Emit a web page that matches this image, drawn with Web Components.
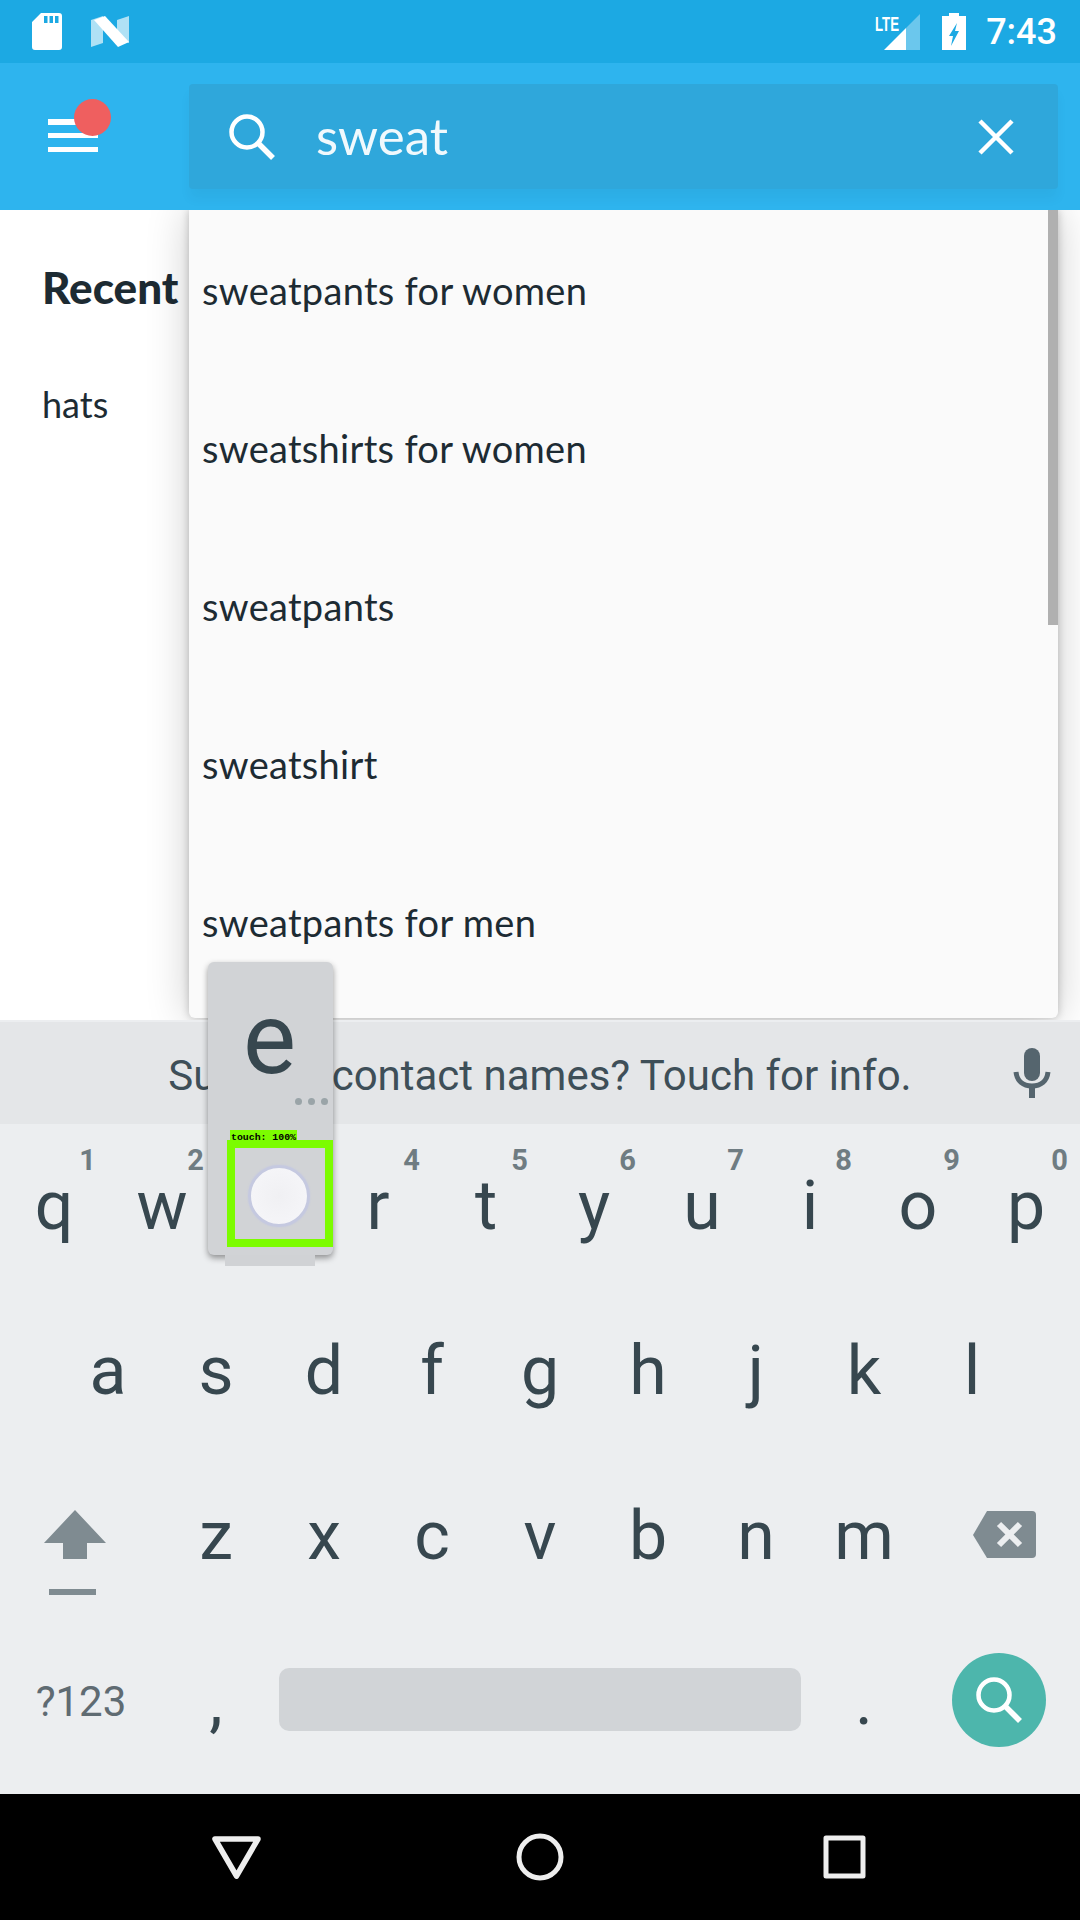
<!DOCTYPE html>
<html>
<head>
<meta charset="utf-8">
<style>
  html, body { margin: 0; padding: 0; background: #fff; }
  body { width: 1080px; height: 1920px; overflow: hidden; display: flex; flex-direction: column; position: relative; font-family: Roboto, sans-serif; }
</style>
</head>
<body>
<status-bar></status-bar>
<app-bar query="sweat"></app-bar>
<main-area>
  <recent-pane slot="recent" term="hats"></recent-pane>
  <suggestion-list slot="list">
    <suggestion-item>sweatpants for women</suggestion-item>
    <suggestion-item>sweatshirts for women</suggestion-item>
    <suggestion-item>sweatpants</suggestion-item>
    <suggestion-item>sweatshirt</suggestion-item>
    <suggestion-item>sweatpants for men</suggestion-item>
  </suggestion-list>
</main-area>
<key-board></key-board>
<nav-bar></nav-bar>
<key-popup letter="e"></key-popup>

<script>
class StatusBar extends HTMLElement {
  constructor() {
    super();
    this.shadowDOM = this.attachShadow({ mode: 'open' });
  }

  connectedCallback() {
    this.shadowDOM.innerHTML = `
      <style>
        :host { display: flex; align-items: center; height: 63px; flex: none; background: #1ca9e3; padding: 0 23px 0 32px; color: #fff; font-family: Roboto, sans-serif; }
        svg { display: block; flex: none; }
        .sd { margin-right: 29px; }
        .lte { margin-left: auto; margin-right: 22px; }
        .battery { margin-right: 20px; }
        .time { font-size: 36px; font-weight: 500; line-height: 63px; margin-top: 1px; }
      </style>
      <svg class="sd" width="30" height="37" viewBox="0 0 30 37">
        <path fill="#fff" fill-rule="evenodd" d="M9 0H27a3 3 0 0 1 3 3V34a3 3 0 0 1-3 3H3a3 3 0 0 1-3-3V9ZM12 3v7h3.500V3ZM17.500 3v7h3.500V3ZM23 3v7h3.500V3Z"/>
      </svg>
      <svg width="38" height="31" viewBox="0 0 38 31">
        <path fill="#fff" opacity=".65" d="M0 4 12 0V27L0 31Z"/>
        <path fill="#fff" opacity=".65" d="M26 4 38 0V27L26 23Z"/>
        <path fill="#fff" d="M3 4 14 0 38 26 27 31Z"/>
      </svg>
      <svg class="lte" width="45" height="36" viewBox="0 0 45 36">
        <path fill="#fff" d="M9 36 31 14V36Z"/>
        <path fill="#fff" opacity=".35" d="M31 14 45 0V36H31Z"/>
        <text x="0" y="17" font-family="Liberation Sans" font-weight="700" font-size="20" fill="#fff" textLength="24" lengthAdjust="spacingAndGlyphs">LTE</text>
      </svg>
      <svg class="battery" width="24" height="37" viewBox="0 0 24 37">
        <path fill="#fff" d="M7 0H17V3H24V37H0V3H7Z"/>
        <path fill="#1ca9e3" d="M15 10 7 23H11L9 33 17 18H13Z"/>
      </svg>
      <span class="time">7:43</span>`;
  }
}

class AppBar extends HTMLElement {
  constructor() {
    super();
    this.shadowDOM = this.attachShadow({ mode: 'open' });
  }

  connectedCallback() {
    this.shadowDOM.innerHTML = `
      <style>
        :host { display: flex; align-items: center; height: 147px; flex: none; background: #2eb4ee; padding-left: 48px; padding-right: 22px; box-sizing: border-box; position: relative; z-index: 2; font-family: Lato, sans-serif; }
        .menu { width: 50px; height: 33px; position: relative; margin-bottom: 2px; margin-right: 91px; display: flex; flex-direction: column; justify-content: space-between; flex: none; }
        .menu i { display: block; height: 5.500px; background: #fff; }
        .dot { position: absolute; left: 26px; top: -20px; width: 37px; height: 37px; border-radius: 50%; background: #ef5f5f; }
        .box { flex: 1; height: 105px; background: #2fa7db; border-radius: 4px; display: flex; align-items: center; padding: 0 44px 0 40px; box-shadow: 0 10px 12px rgba(0,0,0,.04); }
        .text { color: rgba(255,255,255,.93); font-size: 51px; font-weight: 400; margin-left: 41px; flex: 1; margin-bottom: 2px; }
        svg { display: block; flex: none; }
      </style>
      <div class="menu"><i></i><i></i><i></i><span class="dot"></span></div>
      <div class="box">
        <svg width="46" height="46" viewBox="0 0 46 46" fill="none" stroke="#fff">
          <circle cx="18" cy="18" r="15.500" stroke-width="4.500"/>
          <path d="M29 29 44 44" stroke-width="5.500"/>
        </svg>
        <span class="text">${this.getAttribute('query')}</span>
        <svg width="36" height="36" viewBox="0 0 36 36" fill="none" stroke="#fff" stroke-width="4.500">
          <path d="M2 2 34 34M34 2 2 34"/>
        </svg>
      </div>`;
  }
}

class MainArea extends HTMLElement {
  constructor() {
    super();
    this.shadowDOM = this.attachShadow({ mode: 'open' });
  }

  connectedCallback() {
    this.shadowDOM.innerHTML = `
      <style>
        :host { display: flex; height: 810px; flex: none; background: #fff; overflow: hidden; }
      </style>
      <slot name="recent"></slot>
      <slot name="list"></slot>`;
  }
}

class RecentPane extends HTMLElement {
  constructor() {
    super();
    this.shadowDOM = this.attachShadow({ mode: 'open' });
  }

  connectedCallback() {
    this.shadowDOM.innerHTML = `
      <style>
        :host { display: block; width: 189px; box-sizing: border-box; padding: 51px 0 0 42px; flex: none; font-family: Lato, sans-serif; color: #1d2b33; white-space: nowrap; }
        h2 { margin: 0 0 69px; font-size: 44px; line-height: 52px; font-weight: 900; }
        p { margin: 0; font-size: 36px; line-height: 44px; }
      </style>
      <h2>Recent</h2>
      <p>${this.getAttribute('term')}</p>`;
  }
}

class SuggestionList extends HTMLElement {
  constructor() {
    super();
    this.shadowDOM = this.attachShadow({ mode: 'open' });
  }

  connectedCallback() {
    this.shadowDOM.innerHTML = `
      <style>
        :host { display: block; width: 869px; height: 808px; flex: none; background: #fafafa; box-sizing: border-box; padding-top: 1px; position: relative; border-radius: 0 0 6px 6px; box-shadow: 0 0 9px rgba(0,0,0,.22), 0 0 44px rgba(0,0,0,.2); }
        .thumb { position: absolute; right: 0; top: 0; width: 10px; height: 415px; background: #b0b0b0; }
      </style>
      <slot></slot>
      <div class="thumb"></div>`;
  }
}

class SuggestionItem extends HTMLElement {
  constructor() {
    super();
    this.shadowDOM = this.attachShadow({ mode: 'open' });
  }

  connectedCallback() {
    this.shadowDOM.innerHTML = `
      <style>
        :host { display: flex; align-items: center; height: 158px; padding-left: 13px; font-family: Lato, sans-serif; font-size: 38px; letter-spacing: .3px; color: #1d2b33; }
      </style>
      <slot></slot>`;
  }
}

class KeyCap extends HTMLElement {
  constructor() {
    super();
    this.shadowDOM = this.attachShadow({ mode: 'open' });
  }

  connectedCallback() {
    const hint = this.getAttribute('hint');
    this.shadowDOM.innerHTML = `
      <style>
        :host { display: flex; justify-content: center; width: 108px; height: 165px; line-height: 165px; font-size: 68px; color: #37474f; position: relative; flex: none; }
        :host([wide]) { width: 162px; }
        :host([space]) { width: 540px; }
        .hint { position: absolute; top: 21px; right: 12px; font-size: 29px; line-height: 30px; font-weight: 700; color: #6f7c82; }
      </style>
      <slot></slot>
      ${hint ? `<span class="hint">${hint}</span>` : ''}`;
  }
}

class KeyBoard extends HTMLElement {
  constructor() {
    super();
    this.shadowDOM = this.attachShadow({ mode: 'open' });
  }

  connectedCallback() {
    const keys = (letters, hints = '') => [...letters]
      .map((l, i) => `<key-cap ${hints[i] ? `hint="${hints[i]}"` : ''}>${l}</key-cap>`).join('');
    this.shadowDOM.innerHTML = `
      <style>
        :host { display: block; height: 774px; flex: none; background: #eceef0; font-family: Roboto, sans-serif; position: relative; z-index: 1; }
        .strip { height: 102px; background: #e4e6e8; border-top: 2px solid #eceef0; display: flex; align-items: center; justify-content: center; position: relative; font-size: 42px; color: #3e4f58; }
        .strip span { margin-top: 4px; }
        .mic { position: absolute; left: 1012px; top: 26px; }
        .row { display: flex; justify-content: center; height: 165px; }
        svg { display: block; }
        .symbols { font-size: 42px; color: #5f6b72; }
        .bar { width: 522px; height: 63px; margin-top: 49px; border-radius: 10px; background: #d1d4d7; }
        .go { width: 94px; height: 94px; margin-top: 34px; border-radius: 50%; background: #4db6ac; display: flex; align-items: center; justify-content: center; }
      </style>
      <div class="strip">
        <span>Suggest contact names? Touch for info.</span>
        <svg class="mic" width="40" height="50" viewBox="0 0 40 50" fill="#55656e">
          <rect x="12" y="0" width="16" height="33" rx="8"/>
          <path d="M4 24C5 33 11 38 20 38S35 33 36 24" fill="none" stroke="#55656e" stroke-width="5"/>
          <rect x="17" y="38" width="6" height="12"/>
        </svg>
      </div>
      <div class="row">${keys('qwertyuiop', '1234567890')}</div>
      <div class="row">${keys('asdfghjkl')}</div>
      <div class="row">
        <key-cap wide>
          <svg width="162" height="165" viewBox="0 0 162 165" fill="#7f8b91">
            <path d="M75 56 106 89H87V105H63V89H44Z"/>
            <rect x="49" y="135" width="47" height="6"/>
          </svg>
        </key-cap>
        ${keys('zxcvbnm')}
        <key-cap wide>
          <svg width="162" height="165" viewBox="0 0 162 165">
            <path fill="#7f8b91" d="M69 57H114a4 4 0 0 1 4 4V100a4 4 0 0 1-4 4H69L55 81Z"/>
            <path fill="none" stroke="#eceef0" stroke-width="6" d="M81 70 102 91M102 70 81 91"/>
          </svg>
        </key-cap>
      </div>
      <div class="row">
        <key-cap wide><span class="symbols">?123</span></key-cap>
        <key-cap>,</key-cap>
        <key-cap space><div class="bar"></div></key-cap>
        <key-cap>.</key-cap>
        <key-cap wide>
          <div class="go">
            <svg width="46" height="46" viewBox="0 0 46 46" fill="none" stroke="#fff">
              <circle cx="18" cy="18" r="15.500" stroke-width="4.500"/>
              <path d="M29 29 44 44" stroke-width="5.500"/>
            </svg>
          </div>
        </key-cap>
      </div>`;
  }
}

class KeyPopup extends HTMLElement {
  constructor() {
    super();
    this.shadowDOM = this.attachShadow({ mode: 'open' });
  }

  connectedCallback() {
    this.shadowDOM.innerHTML = `
      <style>
        :host { display: block; position: absolute; left: 208px; top: 962px; width: 125px; height: 293px; background: #d1d3d6; border-radius: 6px; box-shadow: 0 3px 6px rgba(0,0,0,.4); font-family: Roboto, sans-serif; z-index: 5; }
        .tail { position: absolute; left: 17px; top: 293px; width: 90px; height: 11px; background: #d0d2d5; }
        .letter { position: absolute; left: -1px; top: 17px; width: 125px; text-align: center; font-size: 100px; line-height: 120px; color: #37474f; }
        .dots { position: absolute; right: 5px; top: 136px; display: flex; gap: 6px; }
        .dots i { width: 7px; height: 7px; border-radius: 50%; background: #9aa4a8; }
        .label { position: absolute; left: 22px; top: 168px; width: 67px; height: 12px; background: #7cfc00; color: #000; font: 700 9.850px/16px "Liberation Mono", monospace; white-space: nowrap; padding-left: 1px; box-sizing: border-box; }
        .touch { position: absolute; left: 19px; top: 178px; width: 106px; height: 107px; box-sizing: border-box; border: 8px solid #7cfc00; display: flex; align-items: center; justify-content: center; }
        .spot { width: 62px; height: 62px; margin-top: 5px; margin-right: 2px; box-sizing: border-box; border-radius: 50%; border: 3px solid #c5c9e0; background: radial-gradient(circle, #f0f0f3, #f7f7fa); box-shadow: 0 0 2px #c5c9e0; }
      </style>
      <div class="tail"></div>
      <div class="letter">${this.getAttribute('letter')}</div>
      <div class="dots"><i></i><i></i><i></i></div>
      <div class="touch"><div class="spot"></div></div>
      <div class="label">touch: 100%</div>`;
  }
}

class NavBar extends HTMLElement {
  constructor() {
    super();
    this.shadowDOM = this.attachShadow({ mode: 'open' });
  }

  connectedCallback() {
    this.shadowDOM.innerHTML = `
      <style>
        :host { display: flex; height: 126px; flex: none; background: #000; align-items: center; padding-left: 212px; position: relative; z-index: 1; }
        svg { display: block; flex: none; }
        .home { margin-left: 255px; }
        .recents { margin-left: 259px; }
      </style>
      <svg width="49" height="43" viewBox="0 0 49 43" fill="none" stroke="#eee" stroke-width="5.500" stroke-linejoin="round">
        <path d="M3 3H46L24.500 40Z"/>
      </svg>
      <svg class="home" width="48" height="48" viewBox="0 0 48 48" fill="none" stroke="#eee" stroke-width="5">
        <circle cx="24" cy="24" r="21"/>
      </svg>
      <svg class="recents" width="43" height="44" viewBox="0 0 43 44" fill="none" stroke="#eee" stroke-width="5" stroke-linejoin="round">
        <rect x="3" y="3" width="37" height="38"/>
      </svg>`;
  }
}

customElements.define('status-bar', StatusBar);
customElements.define('app-bar', AppBar);
customElements.define('main-area', MainArea);
customElements.define('recent-pane', RecentPane);
customElements.define('suggestion-list', SuggestionList);
customElements.define('suggestion-item', SuggestionItem);
customElements.define('key-cap', KeyCap);
customElements.define('key-board', KeyBoard);
customElements.define('key-popup', KeyPopup);
customElements.define('nav-bar', NavBar);
</script>
</body>
</html>
